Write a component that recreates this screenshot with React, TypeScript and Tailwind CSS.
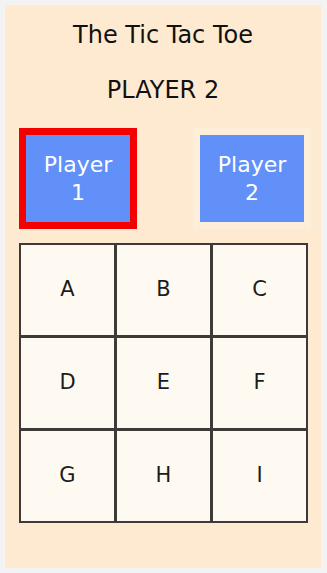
import React from "react";

const cells = ["A", "B", "C", "D", "E", "F", "G", "H", "I"];

export default function App() {
  const current = 1;

  return (
    <div className="min-h-screen bg-[#f3f3f3] p-[5px] font-['DejaVu_Sans',sans-serif]">
      <div className="h-[563px] w-[316px] bg-[#feead0] pt-[13px] pl-[14px]">
        <h1 className="text-center text-[24px] leading-[34px] text-[#111] pr-[14px]">The Tic Tac Toe</h1>
        <h2 className="mt-[21px] text-center text-[24px] leading-[34px] text-[#111] pr-[14px]">PLAYER 2</h2>

        <div className="mt-[21px] flex w-[292px] justify-between">
          {[1, 2].map((p) => (
            <div
              key={p}
              className={`h-[101px] w-[118px] border-[7px] ${
                p === current ? "border-[#f50000]" : "border-[#fdeed9]"
              }`}
            >
              <div className="flex h-full w-full flex-col items-center justify-center bg-[#6190f8] text-[22px] leading-[28px] text-white">
                <span>Player</span>
                <span>{p}</span>
              </div>
            </div>
          ))}
        </div>

        <div className="mt-[14px] grid w-[289px] grid-cols-3 gap-[3px] bg-[#3e3a37] p-[2px]">
          {cells.map((c) => (
            <div
              key={c}
              className="flex h-[90px] items-center justify-center bg-[#fffaf1] text-[21px] text-[#1c1c1c]"
            >
              {c}
            </div>
          ))}
        </div>
      </div>
    </div>
  );
}
